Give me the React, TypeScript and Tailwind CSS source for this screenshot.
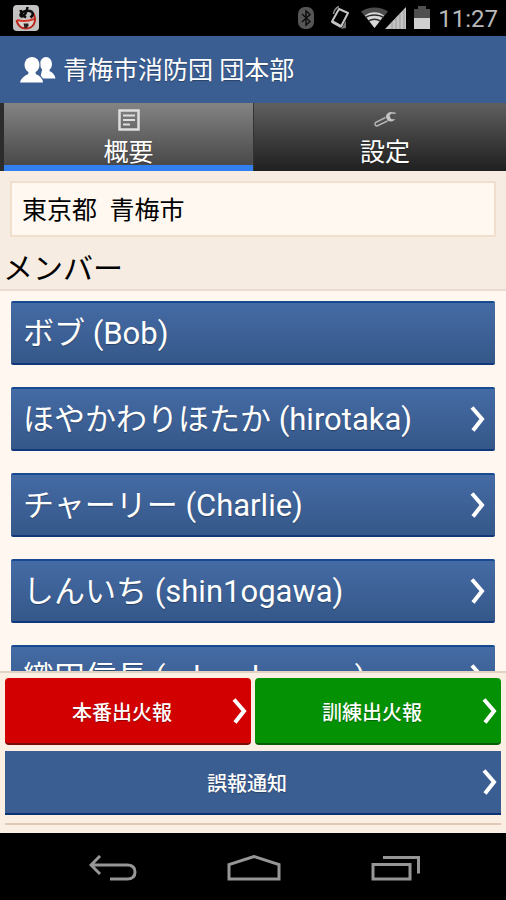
type Member = {
  label: string;
  hasDetail: boolean;
};

const members: Member[] = [
  { label: "ボブ (Bob)", hasDetail: false },
  { label: "ほやかわりほたか (hirotaka)", hasDetail: true },
  { label: "チャーリー (Charlie)", hasDetail: true },
  { label: "しんいち (shin1ogawa)", hasDetail: true },
  { label: "織田信長 (odanobunaga)", hasDetail: true },
];

const textShadow = "[text-shadow:0_1px_1px_rgba(0,0,0,0.3)]";

function Chevron() {
  return (
    <svg
      viewBox="0 0 16 28"
      className="h-7 w-4 shrink-0"
      fill="none"
      stroke="white"
      strokeWidth="4"
      aria-hidden="true"
    >
      <path d="M3 2.500 13 14 4 25.500" />
    </svg>
  );
}

function AppBadge() {
  return (
    <svg viewBox="0 0 26 26" className="size-[26px]" aria-hidden="true">
      <rect width="26" height="26" rx="4" fill="#c4c2c0" />
      <path d="M5 15c0-1 17-1 17-1l-2 7-7 2.500-6-2Z" fill="#d9d4d0" />
      <path d="M3.500 15c1 5 4 8.500 9.500 8.500 8 0 11-8 7.500-15" fill="none" stroke="#b8261c" strokeWidth="2" />
      <path d="M4 15q9 2.500 17-1" fill="none" stroke="#d2382a" strokeWidth="2" />
      <path
        d="M7.500 5c1 4 3 6 5.500 7.500M14.500 2c-.5 5-3 9.500-6 9.500-2-.5-1-4.500 4-5.500 6-1 8 1.500 7 4.500l-2 2"
        fill="none"
        stroke="#0c0c0c"
        strokeWidth="2.500"
      />
      <path d="M10.500 18.500h5V21l-2 2h-2Z" fill="#2b2220" />
    </svg>
  );
}

function StatusIcons() {
  return (
    <div className="flex items-center">
      <svg viewBox="0 0 16 24" className="mr-[15px] h-6 w-4" aria-hidden="true">
        <rect width="16" height="22" y="1" rx="7" fill="#565656" />
        <path d="m4 8 8 7.500-4 3.500V5l4 3.500L4 16" fill="none" stroke="#101010" strokeWidth="1.500" />
      </svg>
      <svg viewBox="0 0 22 26" className="mr-2.5 h-[26px] w-[22px]" fill="none" stroke="#c4c4c4" aria-hidden="true">
        <path d="M10 4 19 8 12 21.500 3 16.500Z" strokeWidth="2" strokeLinejoin="round" />
        <path d="m3 16.500 9 5" strokeWidth="3" />
        <path d="M4.500 9C5 5 6.500 3 10 1.500" strokeWidth="1.500" stroke="#8a8a8a" />
        <path d="M17 15.500v7.500l-5 1Z" fill="#777" stroke="none" />
      </svg>
      <svg viewBox="0 0 46 24" className="mr-[7px] h-6 w-[46px]" aria-hidden="true">
        <path d="M0 5.500C8 0 19 0 27 5.500L13.500 22Z" fill="#4c4c4c" />
        <path d="M4 9.500C9 5 18 5 23 9.500L13.500 22Z" fill="#d8d8d8" />
        <path d="M4.500 11.500C9 8 18 8 22.500 11.500M7.500 15q6-3.500 12 0" fill="none" stroke="#2c2c2c" strokeWidth="1.500" />
        <path d="M45 1v22H24Z" fill="#c4c4c4" />
        <path d="M31 16v7M35 12v11M39 8v15M43 4v19" stroke="#999" />
      </svg>
      <svg viewBox="0 0 16 24" className="mr-2 h-6 w-4" aria-hidden="true">
        <path d="M4 0h8v3h4v10H0V3h4Z" fill="#4f4f4f" />
        <path d="M0 12h16v11H0Z" fill="#cfcfcf" />
      </svg>
    </div>
  );
}

function StatusBar() {
  return (
    <div className="flex h-9 shrink-0 items-center justify-between bg-black pl-[13px] pr-2">
      <AppBadge />
      <div className="flex items-center">
        <StatusIcons />
        <time className="pt-0.5 text-2xl text-[#b9b9b9]">11:27</time>
      </div>
    </div>
  );
}

function Header() {
  return (
    <header className="flex h-[67px] shrink-0 items-center gap-[7px] bg-[#3b5e92] pl-5">
      <svg viewBox="0 0 36 28" className="h-7 w-9" fill="white" aria-hidden="true">
        <ellipse cx="26" cy="8" rx="6" ry="7" />
        <path d="M22.500 12h7v3q5 2 6 7.500H20Z" />
        <g stroke="#3b5e92" strokeWidth="2" className="[paint-order:stroke]">
          <path d="M8.500 14h7v4q7 2.500 7.500 8.500H0Q1.500 20.500 8.500 18Z" />
          <ellipse cx="12" cy="9" rx="7.500" ry="8" />
        </g>
        <path d="M8.500 13h7v6h-7Z" />
      </svg>
      <h1 className={`pt-[3px] text-[25px] text-white ${textShadow}`}>青梅市消防団 団本部</h1>
    </header>
  );
}

function Tabs() {
  return (
    <div role="tablist" className="grid h-[68px] shrink-0 grid-cols-2">
      <button
        role="tab"
        aria-selected="true"
        className="flex bg-[#2c2c2c] pl-1"
      >
        <span className="flex h-full flex-1 flex-col items-center gap-2.5 border-b-6 border-[#3280f0] bg-linear-to-b from-[#848484] to-[#494949] pt-1.5">
          <svg viewBox="0 0 22 22" className="size-[22px] shrink-0" fill="none" stroke="#dedede" aria-hidden="true">
            <rect x="1.500" y="1.500" width="19" height="19" strokeWidth="2.500" />
            <path d="M5 6.500h12M5 11h12M5 15.500h7" strokeWidth="2" />
          </svg>
          <span className={`text-[25px] leading-6 text-white ${textShadow}`}>概要</span>
        </span>
      </button>
      <button
        role="tab"
        aria-selected="false"
        className="flex flex-col items-center gap-2.5 border-l border-[#333] bg-linear-to-b from-[#606060] to-[#202020] pt-1.5 pl-2.5"
      >
        <svg viewBox="0 0 22 22" className="size-[22px] shrink-0" fill="none" aria-hidden="true">
          <path
            d="M11.500 8.500 1.500 13.500Q0 16.500 3 17L13.500 12"
            stroke="#b4b4b4"
            strokeWidth="1.500"
          />
          <path
            d="M21.500 3.500 16 3Q11.500 4.500 12 8.500L14 12l4 .5 3.500-2-4.500-.5-1.500-3.500 2-2 4 .5Z"
            fill="#c4c4c4"
          />
        </svg>
        <span className={`text-[25px] leading-6 text-white ${textShadow}`}>設定</span>
      </button>
    </div>
  );
}

function MemberRow({ label, hasDetail }: Member) {
  return (
    <li>
      <button className="flex h-16 w-full items-center justify-between rounded-xs border-y-2 border-t-[#174a91] border-b-[#12377a] bg-linear-to-b from-[#456ba5] to-[#355889] pl-3 pr-2.5">
        <span className={`whitespace-nowrap pt-0.5 text-[31px] leading-10 text-white ${textShadow}`}>{label}</span>
        {hasDetail && <Chevron />}
      </button>
    </li>
  );
}

function ReportButton({ label, className }: { label: string; className: string }) {
  return (
    <button className={`flex items-center border-b-2 pl-2 pr-1 text-xl font-medium text-white ${className}`}>
      <span className={`flex-1 pt-1 ${textShadow}`}>{label}</span>
      <Chevron />
    </button>
  );
}

function NavigationBar() {
  return (
    <nav className="flex h-[67px] shrink-0 items-center justify-center gap-[90px] bg-black pt-1 pl-1 text-[#969696]">
      <button aria-label="戻る">
        <svg viewBox="0 0 48 28" className="h-7 w-12" fill="none" stroke="currentColor" strokeWidth="3" aria-hidden="true">
          <path d="M11 1 2 10l9 9M2 10h36q8 0 8 7t-8 7H21" />
        </svg>
      </button>
      <button aria-label="ホーム">
        <svg viewBox="0 0 54 28" className="h-7 w-[54px]" fill="none" stroke="currentColor" strokeWidth="3" aria-hidden="true">
          <path d="M2 24V9.500L27 1.500l25 8V24Z" />
        </svg>
      </button>
      <button aria-label="最近のアプリ">
        <svg viewBox="0 0 50 28" className="h-7 w-[50px]" fill="none" stroke="currentColor" strokeWidth="3" aria-hidden="true">
          <path d="M2 9.500h37V24H2ZM12 2.500h35.500v16" />
        </svg>
      </button>
    </nav>
  );
}

export default function App() {
  return (
    <div className="flex h-screen flex-col overflow-hidden bg-[#fff7f0] font-[Roboto,'Noto_Sans_CJK_JP',sans-serif]">
      <StatusBar />
      <Header />
      <Tabs />

      <section className="shrink-0 border-b-2 border-[#e9ddd3] bg-[#f7ece1] pt-2.5">
        <p className="mx-2.5 flex h-14 items-center whitespace-pre border-2 border-[#f0dfcd] bg-[#fff8f0] pt-[3px] pl-2.5 text-[25px] text-black">
          東京都  青梅市
        </p>
        <h2 className="h-[52px] pt-3.5 pl-[3px] text-3xl text-black">メンバー</h2>
      </section>

      <ul className="min-h-0 flex-1 space-y-[22px] overflow-x-hidden overflow-y-auto px-[11px] pt-2.5 [scrollbar-width:none]">
        {members.map((member) => (
          <MemberRow key={member.label} {...member} />
        ))}
      </ul>

      <footer className="shrink-0 border-t-2 border-[#e3d3c5] bg-[#fbeee3] px-[5px] pt-[5px] pb-2">
        <div className="grid grid-cols-2 gap-1">
          <ReportButton label="本番出火報" className="h-[67px] rounded-sm border-[#7d0808] bg-[#d20000]" />
          <ReportButton label="訓練出火報" className="h-[67px] rounded-sm border-[#0a5c08] bg-[#049104]" />
        </div>
        <div className="mt-1.5 grid">
          <ReportButton label="誤報通知" className="h-16 border-[#0b3372] bg-[#3b5e92]" />
        </div>
        <hr className="mt-2 border-t-2 border-[#e2c9b5]" />
      </footer>

      <NavigationBar />
    </div>
  );
}
